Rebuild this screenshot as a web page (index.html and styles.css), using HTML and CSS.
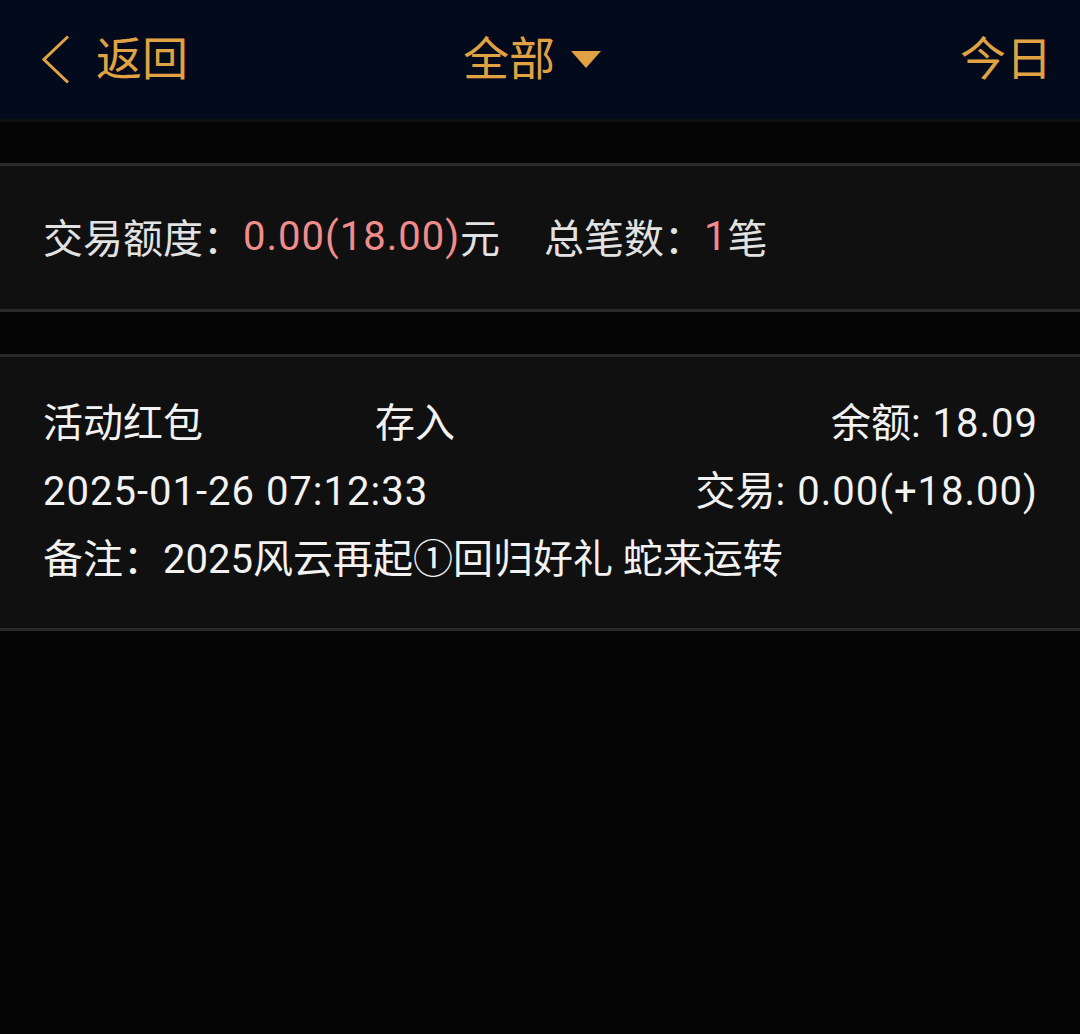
FILE: index.html
```html
<!DOCTYPE html>
<html lang="zh-CN">
<head>
<meta charset="utf-8">
<title>交易记录</title>
<link rel="stylesheet" href="styles.css">
</head>
<body>
<header class="topbar">
  <div class="back">
    <svg class="chev" width="28" height="49" viewBox="0 0 28 49"><polyline points="26,1.5 2,24.5 26,47.5" fill="none" stroke="#e0a243" stroke-width="3"/></svg>
    <span>返回</span>
  </div>
  <div class="title">
    <span>全部</span>
    <svg class="tri" width="30" height="17" viewBox="0 0 30 17"><polygon points="0,0 30,0 15,17" fill="#e0a243"/></svg>
  </div>
  <div class="today">今日</div>
</header>

<section class="summary">
  <span class="label">交易额度：</span><span class="red num">0.00(18.00)</span><span class="label">元</span>
  <span class="label count">总笔数：</span><span class="red num">1</span><span class="label">笔</span>
</section>

<section class="record">
  <div class="row row1">
    <span>活动红包</span>
    <span>存入</span>
    <span class="right">余额<span class="num">: 18.09</span></span>
  </div>
  <div class="row row2">
    <span class="num">2025-01-26 07:12:33</span>
    <span class="right">交易<span class="num">: 0.00(+18.00)</span></span>
  </div>
  <div class="row">
    <span>备注：2025风云再起①回归好礼 蛇来运转</span>
  </div>
</section>
</body>
</html>
```

FILE: styles.css
```css
html, body {
  margin: 0;
  padding: 0;
}
body {
  background: #050505;
  font-family: Roboto, "Noto Sans CJK SC", sans-serif;
  color: #f2f2f2;
  width: 1080px;
  min-height: 1034px;
}
.topbar {
  height: 118px;
  background: #020a1c;
  border-bottom: 3px solid #0e0f12;
  display: grid;
  grid-template-columns: 1fr auto 1fr;
  align-items: center;
  padding: 0 28px 1px 42px;
  color: #e0a243;
  font-size: 46px;
  line-height: 1;
}
.back {
  display: flex;
  align-items: center;
}
.chev {
  display: block;
  margin-right: 26px;
}
.title {
  display: flex;
  align-items: center;
  margin-left: -30px;
}
.tri {
  display: block;
  margin-left: 16px;
}
.today {
  justify-self: end;
}
.summary {
  margin-top: 41px;
  height: 143px;
  background: #101010;
  border-top: 3px solid #2a2a2a;
  border-bottom: 3px solid #2a2a2a;
  display: flex;
  align-items: center;
  padding-left: 43px;
  padding-bottom: 3px;
  box-sizing: border-box;
  height: 149px;
  font-size: 40px;
  white-space: pre;
}
.label {
  color: #e2e2e2;
}
.red {
  color: #f08c8c;
}
.num {
  letter-spacing: 1px;
}
.count {
  margin-left: 44px;
}
.record {
  margin-top: 42px;
  background: #101010;
  border-top: 3px solid #2a2a2a;
  border-bottom: 3px solid #2a2a2a;
  padding: 33px 42px 34px 43px;
  font-size: 40px;
}
.row {
  display: grid;
  grid-template-columns: 1fr auto;
  height: 68px;
  line-height: 68px;
  white-space: nowrap;
}
.row1 {
  grid-template-columns: 332px 1fr auto;
}
.right {
  justify-self: end;
}
```
